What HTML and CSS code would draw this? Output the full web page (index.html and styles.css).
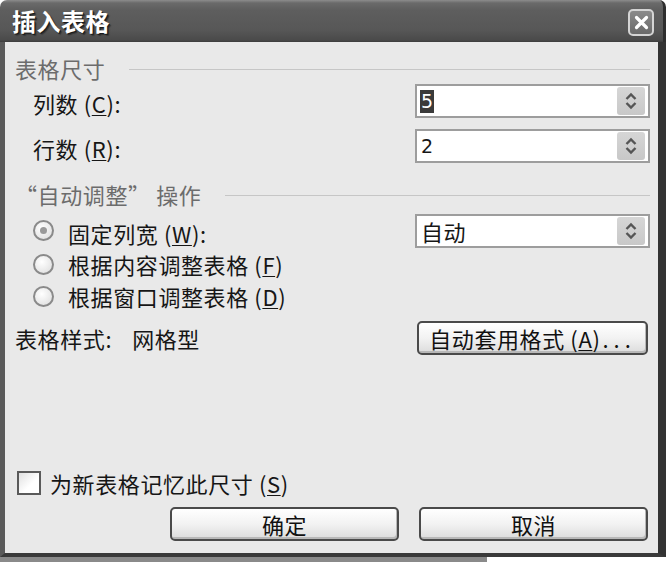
FILE: index.html
```html
<!DOCTYPE html>
<html lang="zh">
<head>
<meta charset="utf-8">
<title>插入表格</title>
<link rel="stylesheet" href="styles.css">
</head>
<body>
<div class="window">
  <div class="titlebar">
    <span class="title">插入表格</span>
    <span class="close">
      <svg width="15" height="15" viewBox="0 0 15 15"><path d="M2.5 2.5 L12.5 12.5 M12.5 2.5 L2.5 12.5" stroke="#fff" stroke-width="3.2" stroke-linecap="round"/></svg>
    </span>
  </div>
  <div class="body">
    <div class="group g1"><span>表格尺寸</span><i class="rule"></i></div>
    <div class="row r1">
      <span class="label">列数 (<u>C</u>):</span>
      <div class="spin"><span class="val sel">5</span><span class="spinbtn"><svg width="14" height="20" viewBox="0 0 14 20"><path d="M2.5 8 L7 3.5 L11.5 8 M2.5 12 L7 16.5 L11.5 12" fill="none" stroke="#555" stroke-width="2.4"/></svg></span></div>
    </div>
    <div class="row r2">
      <span class="label">行数 (<u>R</u>):</span>
      <div class="spin"><span class="val">2</span><span class="spinbtn"><svg width="14" height="20" viewBox="0 0 14 20"><path d="M2.5 8 L7 3.5 L11.5 8 M2.5 12 L7 16.5 L11.5 12" fill="none" stroke="#555" stroke-width="2.4"/></svg></span></div>
    </div>
    <div class="group g2"><span>“自动调整” 操作</span><i class="rule"></i></div>
    <div class="row r3">
      <span class="label radio-label"><span class="radio on"></span>固定列宽 (<u>W</u>):</span>
      <div class="spin"><span class="val cjk">自动</span><span class="spinbtn"><svg width="14" height="20" viewBox="0 0 14 20"><path d="M2.5 8 L7 3.5 L11.5 8 M2.5 12 L7 16.5 L11.5 12" fill="none" stroke="#555" stroke-width="2.4"/></svg></span></div>
    </div>
    <div class="radio-row"><span class="radio"></span><span class="txt">根据内容调整表格 (<u>F</u>)</span></div>
    <div class="radio-row"><span class="radio"></span><span class="txt">根据窗口调整表格 (<u>D</u>)</span></div>
    <div class="row r4">
      <span class="style-label">表格样式:<span class="style-val">网格型</span></span>
      <button class="btn autofmt">自动套用格式 (<u>A</u>)<span class="dots">...</span></button>
    </div>
    <div class="spacer"></div>
    <div class="check-row"><span class="check"></span><span class="txt">为新表格记忆此尺寸 (<u>S</u>)</span></div>
    <div class="buttons">
      <button class="btn ok">确定</button>
      <button class="btn cancel">取消</button>
    </div>
  </div>
  <div class="under"><span class="under-l"></span><span class="under-r"></span></div>
</div>
</body>
</html>
```

FILE: styles.css
```css
* { box-sizing: border-box; }
html, body { margin: 0; padding: 0; }
body {
  width: 666px;
  height: 562px;
  overflow: hidden;
  background: #ffffff;
  font-family: "Noto Sans CJK SC", "Noto Sans", sans-serif;
  color: #161616;
}
.window {
  width: 666px;
  height: 562px;
  display: flex;
  flex-direction: column;
}
.titlebar {
  height: 42px;
  flex: none;
  display: flex;
  align-items: center;
  justify-content: space-between;
  padding: 0 9px 0 12px;
  background: linear-gradient(#8c8c8c 0px, #6a6a6a 3px, #5e5e5e 10px, #575757 30px, #4a4a4a 40px, #3c3c3c 42px);
  border-radius: 7px 7px 0 0;
  border-right: 3px solid #2e2e2e;
}
.title {
  color: #ffffff;
  font-size: 24px;
  font-weight: 700;
  letter-spacing: 0.5px;
  text-shadow: 1px 1px 0 #1a1a1a, 2px 2px 1px #333;
  line-height: 1;
}
.close {
  width: 26px;
  height: 27px;
  border: 2px solid #d4d4d4;
  border-radius: 5px;
  background: linear-gradient(#8a8a8a, #6a6a6a);
  display: flex;
  align-items: center;
  justify-content: center;
  margin-top: 2px;
}
.body {
  flex: none;
  height: 515px;
  background: #e9e9e9;
  border-left: 5px solid #5a5a5a;
  border-right: 8px solid #333;
  border-bottom: 4px solid #3a3a3a;
  padding: 14px 8px 12px 10px;
  display: flex;
  flex-direction: column;
  font-size: 22px;
  letter-spacing: 0.6px;
}
.under { flex: 1; display: flex; }
.under-l { width: 487px; background: #8a8a8a; }
.under-r { flex: 1; background: #fff; }
.group {
  height: 24px;
  display: flex;
  align-items: center;
  color: #6c6c6c;
}
.group .rule {
  flex: 1;
  height: 1px;
  background: #c6c6c6;
  margin-left: 24px;
  margin-top: 2px;
}
.g2 { margin-top: 19px; }
.g2 .rule { margin-left: 24px; }
.row {
  height: 34px;
  display: flex;
  align-items: center;
  justify-content: space-between;
}
.r1 { margin-top: 4px; }
.r2 { margin-top: 11px; }
.r3 { margin-top: 8px; }
.r4 { margin-top: 9px; }
.label { padding-left: 18px; display: flex; align-items: center; padding-top: 3px; }
u { text-decoration: underline; text-underline-offset: 2px; text-decoration-thickness: 1px; }
.spin {
  width: 235px;
  height: 34px;
  border: 2px solid #9d9d9d;
  background: #fff;
  display: flex;
  align-items: center;
  justify-content: space-between;
  padding: 0 3px 0 3px;
}
.val {
  font-family: "DejaVu Sans", sans-serif;
  font-size: 19px;
  padding-left: 1px;
  line-height: 1;
  letter-spacing: 0;
}
.val.sel { background: #3a3a3a; color: #fff; padding: 2px 1px; }
.val.cjk { font-family: "Noto Sans CJK SC", sans-serif; font-size: 22px; letter-spacing: 0.6px; }
.spinbtn {
  width: 28px;
  height: 28px;
  background: linear-gradient(#d6d6d6, #c8c8c8);
  border-radius: 3px;
  display: flex;
  align-items: center;
  justify-content: center;
}
.radio {
  width: 21px;
  height: 21px;
  border-radius: 50%;
  border: 2px solid #8a8a8a;
  background: radial-gradient(circle at 40% 35%, #ffffff, #e6e6e6 70%, #d8d8d8);
  display: inline-block;
  margin-right: 14px;
  flex: none;
  position: relative;
}
.radio.on::after {
  content: "";
  position: absolute;
  left: 5px; top: 5px;
  width: 7px; height: 7px;
  border-radius: 50%;
  background: #9a9a9a;
}
.radio-label { padding-left: 18px; }
.radio-label .radio { margin-top: -4px; }
.radio-row {
  height: 32px;
  display: flex;
  align-items: center;
  padding-left: 18px;
}
.txt { padding-top: 0; }
.r3 + .radio-row { margin-top: 0; }
.style-label { padding-top: 0; }
.style-val { margin-left: 20px; }
.btn {
  font-family: "Noto Sans CJK SC", sans-serif;
  font-size: 22px;
  letter-spacing: 0.6px;
  color: #111;
  height: 34px;
  border: 2px solid #4a4a4a;
  border-radius: 5px;
  background: linear-gradient(#ffffff, #f2f2f2 50%, #dcdcdc);
  box-shadow: inset -1px -2px 0 #b8b8b8;
  padding: 0;
  display: flex;
  align-items: center;
  justify-content: center;
  line-height: 1;
}
.dots { letter-spacing: 5px; margin-left: 2px; }
.autofmt { width: 231px; margin-right: 2px; }
.spacer { flex: 1; }
.check-row {
  height: 24px;
  display: flex;
  align-items: center;
  padding-left: 2px;
}
.check {
  width: 24px;
  height: 24px;
  border: 2px solid #5a5a5a;
  background: linear-gradient(135deg, #e0e0e0, #ffffff 60%);
  margin-right: 9px;
  flex: none;
}
.buttons {
  margin-top: 12px;
  height: 34px;
  display: flex;
  justify-content: flex-end;
  gap: 20px;
  padding-right: 2px;
}
.ok, .cancel { width: 229px; }
```
